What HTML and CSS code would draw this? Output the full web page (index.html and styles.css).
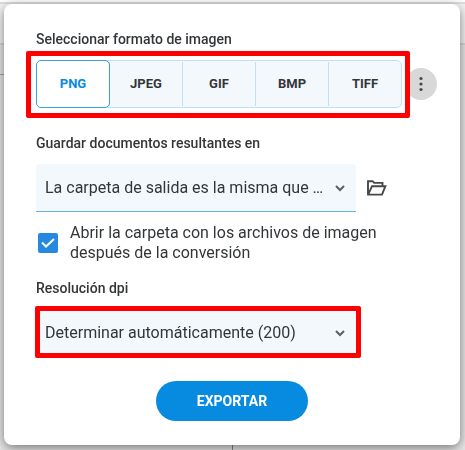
FILE: index.html
```html
<!DOCTYPE html>
<html lang="es">
<head>
    <meta charset="UTF-8">
    <meta name="viewport" content="width=device-width, initial-scale=1.0">
    <title>Exportar a imagen</title>
    <link rel="stylesheet" href="styles.css">
</head>
<body>
    <div class="backdrop">
        <div class="backdrop-top"></div>
        <div class="backdrop-bar"></div>
        <div class="backdrop-ruler"></div>
        <div class="backdrop-page"></div>
    </div>

    <form class="dialog">
        <fieldset class="section">
            <legend class="title">Seleccionar formato de imagen</legend>
            <div class="row">
                <div class="formats highlight">
                    <label class="format"><input type="radio" name="format" value="png" checked><span>PNG</span></label>
                    <label class="format"><input type="radio" name="format" value="jpeg"><span>JPEG</span></label>
                    <label class="format"><input type="radio" name="format" value="gif"><span>GIF</span></label>
                    <label class="format"><input type="radio" name="format" value="bmp"><span>BMP</span></label>
                    <label class="format"><input type="radio" name="format" value="tiff"><span>TIFF</span></label>
                </div>
                <button type="button" class="more" aria-label="Más opciones">
                    <svg width="4" height="16" viewBox="0 0 4 16" fill="#484848">
                        <circle cx="2" cy="2.5" r="1.6"/>
                        <circle cx="2" cy="8" r="1.6"/>
                        <circle cx="2" cy="13.5" r="1.6"/>
                    </svg>
                </button>
            </div>
        </fieldset>

        <div class="section">
            <label class="title" for="folder">Guardar documentos resultantes en</label>
            <div class="row">
                <div class="select underlined">
                    <select id="folder">
                        <option>La carpeta de salida es la misma que ...</option>
                    </select>
                    <svg class="chevron" width="10" height="7" viewBox="0 0 10 7" fill="none" stroke="#5c5f62" stroke-width="2">
                        <path d="M1 1l4 4 4-4"/>
                    </svg>
                </div>
                <button type="button" class="browse" aria-label="Elegir carpeta">
                    <svg width="20" height="16" viewBox="0 0 20 16" fill="none" stroke="#484848" stroke-width="1.9" stroke-linejoin="miter">
                        <path d="M1 14.6V1.2h4.6l1.6 1.7h8.3V6"/>
                        <path d="M1.2 14.6L5 6.2h13.4l-3.4 8.4z"/>
                    </svg>
                </button>
            </div>
            <label class="check">
                <input type="checkbox" checked>
                <svg class="tick" width="14" height="10" viewBox="0 0 14 10" fill="none" stroke="#fff" stroke-width="2">
                    <path d="M1 4.5l4 4 8-7.5"/>
                </svg>
                <span>Abrir la carpeta con los archivos de imagen después de la conversión</span>
            </label>
        </div>

        <div class="section">
            <label class="title" for="dpi">Resolución dpi</label>
            <div class="select highlight">
                <select id="dpi">
                    <option>Determinar automáticamente (200)</option>
                </select>
                <svg class="chevron" width="10" height="7" viewBox="0 0 10 7" fill="none" stroke="#5c5f62" stroke-width="2">
                    <path d="M1 1l4 4 4-4"/>
                </svg>
            </div>
        </div>

        <button type="submit" class="export">EXPORTAR</button>
    </form>
</body>
</html>
```

FILE: styles.css
```css
* {
    box-sizing: border-box;
}
body {
    margin: 0;
    padding: 4px 5px 5px 4px;
    background: #e9e9e9;
    color: #333639;
    font-family: Roboto, "Liberation Sans", sans-serif;
    font-size: 16px;
    line-height: 20px;
}
button, select {
    font: inherit;
    color: inherit;
    border: 0;
    padding: 0;
    margin: 0;
}

/* editor window behind the dialog */
.backdrop {
    position: fixed;
    inset: 0;
    z-index: -1;
    display: flex;
    flex-direction: column;
}
.backdrop-top {
    height: 4px;
    background: #fff;
    border-bottom: 2px solid #dedede;
}
.backdrop-bar {
    height: 41px;
    background: #f5f5f5;
    border-bottom: 2px solid #d9d9d9;
}
.backdrop-ruler {
    width: 50%;
    height: 30px;
    border-bottom: 1px solid #aaa;
}
.backdrop-page {
    flex: 1;
    width: 50%;
    border-right: 1px solid #888;
}

.dialog {
    display: flex;
    flex-direction: column;
    padding: 25px 23px 24px 32px;
    background: #fff;
    border-radius: 8px;
    box-shadow: 0 3px 12px rgba(0,0,0,0.5);
}
.section {
    border: 0;
    margin: 0;
    padding: 0;
    min-width: 0;
}
.section + .section {
    margin-top: 25px;
}
.title {
    display: block;
    padding: 0;
    margin-bottom: 11px;
    font-size: 14px;
    font-weight: 500;
}
.row {
    display: flex;
    align-items: center;
}

/* red frame that marks a step */
.highlight {
    position: relative;
}
.highlight::after {
    content: "";
    position: absolute;
    inset: -3px -5px -1px -1px;
    border: 5px solid #f00;
    border-radius: 2px;
    pointer-events: none;
}
.formats.highlight::after {
    inset: -10px -9px -11px -11px;
    z-index: 2;
}

.formats {
    display: flex;
    flex: 1;
    max-width: 366px;
    height: 48px;
    background: #f3f8fd;
    border: 1px solid #bfe0f7;
    border-radius: 5px;
    z-index: 1;
}
.format {
    display: flex;
    flex: 1;
    margin: 1px 0;
    border-left: 1px solid #bfe0f7;
    font-size: 13px;
    font-weight: 700;
    cursor: pointer;
}
.format:first-child {
    border-left: 0;
}
.format input {
    appearance: none;
    width: 0;
    margin: 0;
}
.format span {
    display: flex;
    flex: 1;
    align-items: center;
    justify-content: center;
}
.format input:checked + span {
    z-index: 1;
    margin: -2px -1px;
    background: #fff;
    border: 1px solid #3d9fe0;
    border-radius: 5px;
    color: #078be0;
}
.more {
    display: flex;
    align-items: center;
    justify-content: center;
    width: 32px;
    height: 32px;
    margin-left: 3px;
    background: #d8d8d8;
    border-radius: 50%;
}

.select {
    position: relative;
    flex: 1;
    max-width: 320px;
    height: 48px;
    background: #f3f8fd;
    border-radius: 4px 4px 0 0;
}
.select select {
    appearance: none;
    width: 100%;
    height: 100%;
    padding: 0 32px 0 9px;
    background: transparent;
    text-overflow: ellipsis;
}
.underlined {
    border-bottom: 1px solid #65b4e8;
}
.chevron {
    position: absolute;
    right: 11px;
    top: 21px;
    pointer-events: none;
}
.browse {
    display: flex;
    margin-left: 11px;
    background: none;
}

.check {
    display: grid;
    grid-template-columns: 20px 1fr;
    column-gap: 12px;
    align-items: center;
    margin: 11px 0 -10px;
    padding: 0 40px 0 2px;
}
.check input {
    grid-area: 1 / 1;
    appearance: none;
    width: 20px;
    height: 20px;
    margin: 0;
    background: #2688df;
    border-radius: 2px;
}
.tick {
    grid-area: 1 / 1;
    justify-self: center;
    z-index: 1;
    pointer-events: none;
}

.export {
    align-self: center;
    width: 152px;
    height: 40px;
    margin: 24px 9px 0 0;
    background: #078be0;
    border-radius: 20px;
    color: #fff;
    font-size: 14px;
    font-weight: 700;
    cursor: pointer;
}
```
